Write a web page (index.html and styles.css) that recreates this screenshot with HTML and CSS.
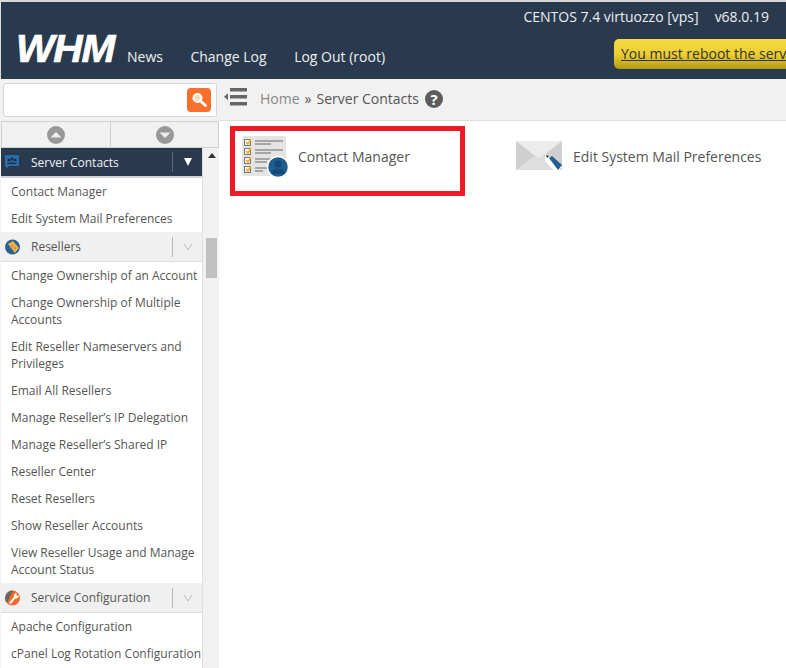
FILE: index.html
```html
<!DOCTYPE html>
<html lang="en">
<head>
<meta charset="utf-8">
<title>WHM Server Contacts</title>
<link rel="stylesheet" href="styles.css">
</head>
<body>
<div class="page">
  <header class="topbar">
    <div class="logo-nav">
      <div class="logo">WHM</div>
      <nav class="nav"><a>News</a><a>Change Log</a><a>Log Out (root)</a></nav>
    </div>
    <div class="top-right">
      <div class="sysinfo"><span>CENTOS 7.4 virtuozzo [vps]</span><span>v68.0.19</span></div>
      <div class="notice"><a>You must reboot the server</a></div>
    </div>
  </header>
  <div class="body-row">
    <aside class="sidebar">
      <div class="search-wrap">
        <div class="search">
          <span class="search-btn">
            <svg width="18" height="18" viewBox="0 0 18 18"><circle cx="7.500" cy="7" r="4" fill="#ffd9bf" stroke="#fff" stroke-width="2"/><path d="M10.500 10l5 4.500" stroke="#fff" stroke-width="3" stroke-linecap="round"/></svg>
          </span>
        </div>
      </div>
      <div class="arrows">
        <div class="arrow-cell"><svg width="20" height="20" viewBox="0 0 20 20"><circle cx="10" cy="10" r="9" fill="#989898"/><path d="M4.500 12.500L10 7l5.500 5.500z" fill="#eee"/></svg></div>
        <div class="arrow-cell"><svg class="arrow-down" width="20" height="20" viewBox="0 0 20 20"><circle cx="10" cy="10" r="9" fill="#989898"/><path d="M4.500 7.500L10 13l5.500-5.500z" fill="#eee"/></svg></div>
      </div>
      <div class="menu-wrap">
        <div class="menu">
          <div class="group active">
            <svg class="gicon" width="18" height="16" viewBox="0 0 18 16"><path d="M1 1h14v11H5l-3 3v-3H1z" fill="#2a6ca8"/><circle cx="5" cy="6" r="1.500" fill="#183049"/><circle cx="8" cy="5" r="1.500" fill="#183049"/><circle cx="11" cy="6" r="1.500" fill="#183049"/><path d="M3 10c0-2 9-2 10 0z" fill="#183049"/></svg>
            <span class="gname">Server Contacts</span><span class="gtoggle"><svg width="8" height="8" viewBox="0 0 8 8"><path d="M0 0h8L4 8z" fill="#fff"/></svg></span>
          </div>
          <a class="item">Contact Manager</a>
          <a class="item">Edit System Mail Preferences</a>
          <div class="group">
            <svg class="gicon" width="18" height="18" viewBox="0 0 18 18"><circle cx="8.500" cy="9" r="7.500" fill="#2d5f92"/><path d="M4 6l5-3 6 7-4 5z" fill="#e6b445"/><circle cx="8" cy="8" r="1" fill="#d9734f"/><circle cx="11" cy="10" r="1" fill="#d9734f"/></svg>
            <span class="gname">Resellers</span><span class="gchev"><svg width="10" height="8" viewBox="0 0 10 8"><path d="M1 1l4 6 4-6" fill="none" stroke="#bbb"/></svg></span>
          </div>
          <a class="item">Change Ownership of an Account</a>
          <a class="item">Change Ownership of Multiple Accounts</a>
          <a class="item">Edit Reseller Nameservers and Privileges</a>
          <a class="item">Email All Resellers</a>
          <a class="item">Manage Reseller’s IP Delegation</a>
          <a class="item">Manage Reseller’s Shared IP</a>
          <a class="item">Reseller Center</a>
          <a class="item">Reset Resellers</a>
          <a class="item">Show Reseller Accounts</a>
          <a class="item">View Reseller Usage and Manage Account Status</a>
          <div class="group">
            <svg class="gicon" width="18" height="18" viewBox="0 0 18 18"><circle cx="8.500" cy="9" r="7.500" fill="#f26b2a"/><path d="M1.500 7A8 8 0 0 1 9 1.500L6 7.500 3 14A8 8 0 0 1 1 9z" fill="#666"/><path d="M5 14l5-6a3 3 0 0 1 3-4l-1 2 2 1 1-1a3.500 3.500 0 0 1-4 3.500L7 15z" fill="#fff"/></svg>
            <span class="gname">Service Configuration</span><span class="gchev"><svg width="10" height="8" viewBox="0 0 10 8"><path d="M1 1l4 6 4-6" fill="none" stroke="#bbb"/></svg></span>
          </div>
          <a class="item">Apache Configuration</a>
          <a class="item">cPanel Log Rotation Configuration</a>
        </div>
        <div class="scrollbar">
          <svg class="scroll-up" width="8" height="5" viewBox="0 0 8 5"><path d="M0 5l4-5 4 5z" fill="#333"/></svg>
          <div class="scroll-thumb"></div>
        </div>
      </div>
    </aside>
    <main class="main">
      <div class="crumbs">
        <svg class="collapse" width="24" height="18" viewBox="0 0 24 18"><path d="M6 0h17v3.500H6zM6 7h17v3.500H6zM6 14h17v3.500H6z" fill="#666"/><path d="M0 8.800l4-3.500v7z" fill="#666"/></svg>
        <a class="home">Home</a><span class="sep">»</span><span class="current">Server Contacts</span>
        <span class="help">?</span>
      </div>
      <div class="tools">
        <a class="tool highlighted">
          <svg width="46" height="42" viewBox="0 0 46 42">
            <rect x="0" y="0" width="44" height="40" rx="3" fill="#e4e4e4"/>
            <g fill="#f7f7f7" stroke="#777"><rect x="2.500" y="3.500" width="6" height="6"/><rect x="2.500" y="12.500" width="6" height="6"/><rect x="2.500" y="21.500" width="6" height="6"/><rect x="2.500" y="30.500" width="6" height="6"/></g>
            <g fill="none" stroke="#e8ae16" stroke-width="1.500"><path d="M4 6l2 2 3-5M4 15l2 2 3-5M4 24l2 2 3-5M4 33l2 2 3-5"/></g>
            <g stroke="#666" stroke-width="1.200"><path d="M13 5h28M13 14h28M13 23h16M13 32h12"/></g>
            <g stroke="#666" stroke-width="1.200"><path d="M13 8h16M13 17h16M13 26h12M13 35h8"/></g>
            <circle cx="36" cy="31" r="10.500" fill="#1f5c8f" stroke="#fff" stroke-width="1.500"/>
            <circle cx="36" cy="28" r="3.500" fill="#154a78"/><path d="M29.500 38c0-7 13-7 13 0z" fill="#154a78"/>
          </svg>
          <span>Contact Manager</span>
        </a>
        <a class="tool second">
          <svg width="47" height="33" viewBox="0 0 47 33">
            <rect x="0" y="1" width="46" height="29" fill="#cfcfcf"/>
            <path d="M0 1h46L23 19z" fill="#ececec"/>
            <path d="M0 30l18-14 5 3 5-3 18 14z" fill="#dedede"/>
            <path d="M29 14l5 3 12 10-6 6-11-12z" fill="#fff"/>
            <path d="M30 15l3 1-2 2z" fill="#222"/>
            <path d="M33 18l3-2 10 9-4 5z" fill="#23608f"/>
          </svg>
          <span>Edit System Mail Preferences</span>
        </a>
      </div>
    </main>
  </div>
</div>
</body>
</html>
```
FILE: styles.css
```css
* { box-sizing: border-box; }
html, body { margin: 0; padding: 0; height: 100%; overflow: hidden; background: #fff; }
body { font-family: "Open Sans", sans-serif; font-size: 12px; color: #555; }
.page { width: 786px; height: 668px; overflow: hidden; display: flex; flex-direction: column; }

.topbar { flex: none; height: 79px; background: #293a4e; border-top: 2px solid #d8d8d8; border-left: 1px solid #ddd; display: flex; justify-content: space-between; color: #fff; }
.logo-nav { display: flex; align-items: flex-end; padding: 0 0 13px 15px; }
.logo { font-family: "Liberation Sans", sans-serif; font-style: italic; font-weight: 700; font-size: 38px; line-height: 30px; letter-spacing: -1px; width: 111px; -webkit-text-stroke: 0.7px #fff; transform: scaleX(1.07); transform-origin: left; margin-bottom: 2px; }
.nav { display: flex; gap: 27.5px; font-size: 14px; line-height: 19px; color: #f0f0f0; }
.top-right { flex: none; width: 172px; position: relative; }
.sysinfo { position: absolute; right: 17px; top: 5px; display: flex; gap: 16px; font-size: 14px; line-height: 19px; white-space: nowrap; color: #eee; }
.notice { position: absolute; left: 0; top: 37px; width: 172px; height: 30px; overflow: hidden; border-radius: 5px 0 0 5px; padding-left: 7px; background: linear-gradient(#f4d83e 0, #ecd035 50%, #b69a14 100%); font-size: 14px; line-height: 29px; color: #333; white-space: nowrap; text-decoration: underline; }

.body-row { flex: 1; display: flex; min-height: 0; }
.sidebar { flex: none; width: 219px; background: #f1f1f1; display: flex; flex-direction: column; }
.search-wrap { flex: none; height: 42px; padding: 4px 2px 4px 3px; }
.search { height: 34px; background: #fff; border: 1px solid #d6d6d6; border-radius: 3px; display: flex; justify-content: flex-end; align-items: center; padding-right: 5px; }
.search-btn { width: 24px; height: 24px; border-radius: 4px; background: #f9702d; display: flex; align-items: center; justify-content: center; }
.arrows { flex: none; height: 27px; display: flex; border: 1px solid #d0d0d0; border-width: 1px 0 0 1px; margin-left: 1px; }
.arrow-cell { flex: 1; display: flex; align-items: center; justify-content: center; border-right: 1px solid #d0d0d0; border-bottom: 1px solid #d0d0d0; }
.arrow-cell svg { display: block; }
.arrow-down { margin-left: 2px; }
.menu-wrap { flex: 1; display: flex; min-height: 0; padding-left: 1px; }
.menu { width: 202px; flex: none; background: #fff; border-right: 1px solid #e0e0e0; overflow: hidden; }
.group { height: 30px; display: flex; align-items: center; background: #f0f0f0; border-bottom: 1px solid #ddd; color: #555; }
.group.active { background: #293a4e; color: #f2f2f2; border-bottom: 2px solid #cfd3d6; }
.gicon { flex: none; margin-left: 3px; width: 18px; }
.gname { flex: 1; margin-left: 9px; font-size: 12px; line-height: 17px; white-space: nowrap; }
.gtoggle, .gchev { flex: none; width: 30px; height: 20px; border-left: 1px solid #b9b9b9; display: flex; align-items: center; justify-content: center; }
.gtoggle { border-left-color: #5a6878; }
.item { display: block; padding: 5px 0 5px 10px; font-size: 12px; line-height: 17px; color: #555; }
.scrollbar { flex: 1; position: relative; background: #f1f1f1; }
.scroll-up { position: absolute; left: 5px; top: 5px; }
.scroll-thumb { position: absolute; left: 3px; top: 90px; width: 11px; height: 40px; background: #c0c0c0; }

.main { flex: 1; min-width: 0; display: flex; flex-direction: column; }
.crumbs { flex: none; height: 42px; background: #f1f1f1; border-bottom: 1px solid #ddd; display: flex; align-items: center; padding: 0 0 2px 5px; font-size: 14px; color: #555; }
.collapse { flex: none; margin-right: 12px; margin-top: -3px; }
.home { color: #888; }
.sep { margin: 0 5px; color: #555; }
.help { width: 18px; height: 18px; margin-left: 6px; border-radius: 50%; background: #5c5c5c; color: #fff; font-size: 15px; font-weight: 700; line-height: 18px; text-align: center; }
.tools { display: flex; padding: 5px 0 0 11px; }
.tool { display: flex; align-items: center; font-size: 14px; line-height: 19px; color: #555; }
.tool svg { flex: none; display: block; }
.highlighted { flex: none; width: 235px; height: 70px; border: 5px solid #ed1c24; padding: 0 0 10px 7px; gap: 10px; }
.highlighted svg { margin-top: 2px; }
.second { margin-left: 51px; height: 60px; gap: 10px; }
```
